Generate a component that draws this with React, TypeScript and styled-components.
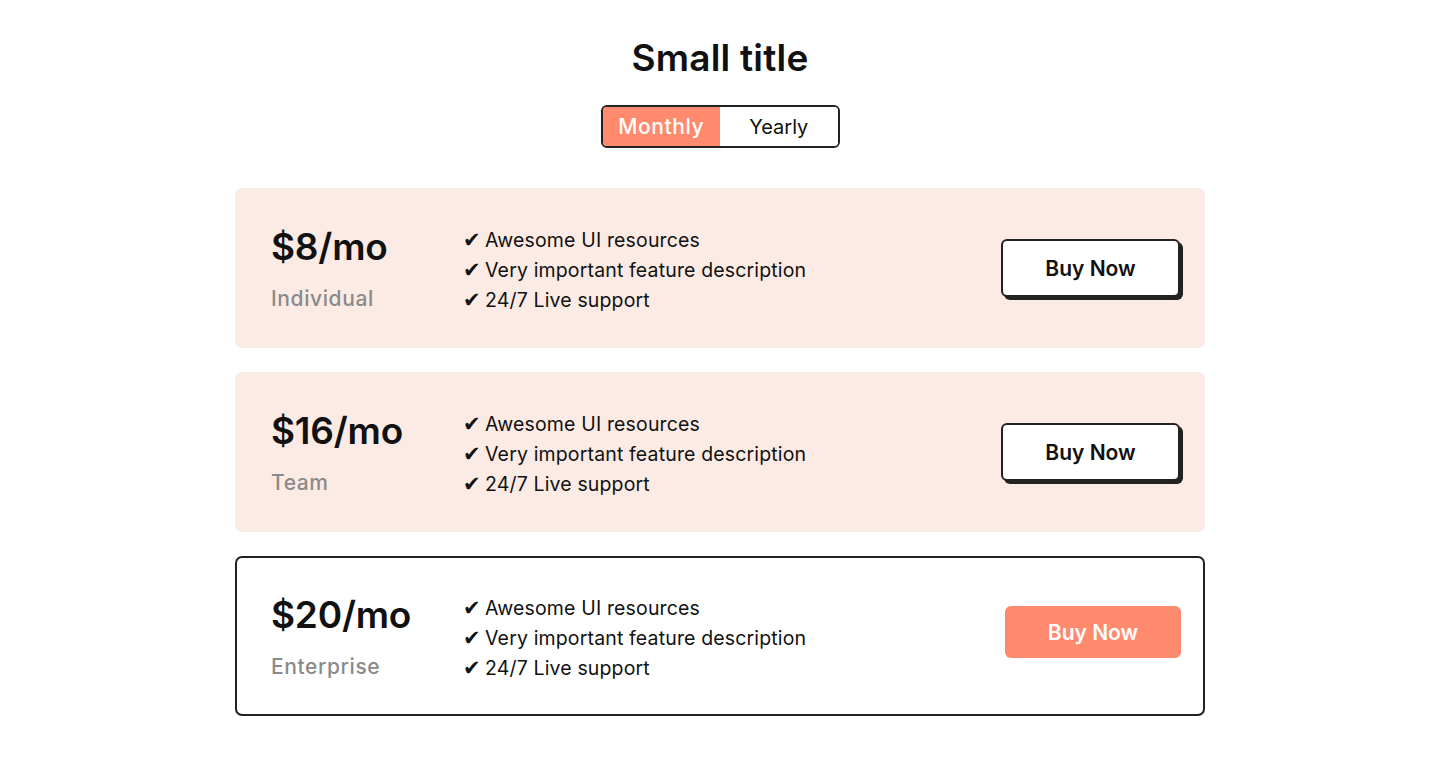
import React, { useState } from 'react';
import styled, { createGlobalStyle } from 'styled-components';

const GlobalStyle = createGlobalStyle`
  body {
    margin: 0;
    background: #ffffff;
    font-family: 'Inter', 'Noto Sans', sans-serif;
    color: #111;
  }
`;

const Page = styled.div`
  display: flex;
  flex-direction: column;
  align-items: center;
  padding-top: 36px;
`;

const Title = styled.h1`
  margin: 0;
  font-size: 37px;
  font-weight: 600;
  line-height: 44px;
  letter-spacing: 0.2px;
`;

const Toggle = styled.div`
  display: flex;
  margin-top: 25px;
  border: 2px solid #222;
  border-radius: 6px;
  overflow: hidden;
  width: 235px;
  height: 39px;
`;

const ToggleOption = styled.button<{ $active?: boolean }>`
  flex: 1;
  border: none;
  margin: 0;
  padding: 0;
  font-family: inherit;
  font-size: ${p => (p.$active ? '21px' : '20px')};
  font-weight: ${p => (p.$active ? 500 : 400)};
  letter-spacing: ${p => (p.$active ? '0.6px' : '0')};
  background: ${p => (p.$active ? '#ff8a6d' : '#fff')};
  color: ${p => (p.$active ? '#fff' : '#111')};
  cursor: pointer;
`;

const Plans = styled.div`
  display: flex;
  flex-direction: column;
  gap: 24px;
  margin-top: 40px;
  width: 970px;
`;

const Card = styled.div<{ $highlight?: boolean }>`
  box-sizing: border-box;
  height: 160px;
  display: flex;
  align-items: center;
  padding: 0 22px 0 36px;
  border-radius: 7px;
  background: ${p => (p.$highlight ? '#fff' : '#fbebe4')};
  border: ${p => (p.$highlight ? '2px solid #222' : 'none')};
  padding-left: ${p => (p.$highlight ? '34px' : '36px')};
`;

const PriceCol = styled.div`
  width: 192px;
  display: flex;
  flex-direction: column;
  gap: 18px;
  margin-top: 4px;
`;

const Price = styled.div`
  font-size: 37px;
  font-weight: 600;
  line-height: 40px;
  letter-spacing: -0.2px;
`;

const PlanName = styled.div`
  font-size: 21px;
  font-weight: 500;
  color: #8a8a8a;
  line-height: 28px;
  letter-spacing: 0.6px;
`;

const Features = styled.ul`
  list-style: none;
  margin: 4px 0 0;
  padding: 0;
  flex: 1;
  font-size: 19.5px;
  line-height: 30px;
  letter-spacing: 0.15px;
`;

const Feature = styled.li`
  display: flex;
  align-items: center;

  &::before {
    content: '✔';
    width: 22px;
    flex: none;
    font-family: 'DejaVu Sans', sans-serif;
    font-size: 21px;
    line-height: 30px;
  }
`;

const BuyButton = styled.button<{ $primary?: boolean }>`
  box-sizing: border-box;
  font-family: inherit;
  font-size: 21px;
  font-weight: 600;
  letter-spacing: 0;
  border-radius: 6px;
  cursor: pointer;
  width: ${p => (p.$primary ? '176px' : '179px')};
  height: ${p => (p.$primary ? '52px' : '58px')};
  margin-right: ${p => (p.$primary ? '0' : '3px')};
  margin-bottom: ${p => (p.$primary ? '8px' : '0')};
  background: ${p => (p.$primary ? '#ff8a6d' : '#fff')};
  color: ${p => (p.$primary ? '#fff' : '#111')};
  border: ${p => (p.$primary ? 'none' : '2px solid #222')};
  box-shadow: ${p => (p.$primary ? 'none' : '3px 3px 0 #222')};
`;

const plans = [
  { price: '$8/mo', name: 'Individual' },
  { price: '$16/mo', name: 'Team' },
  { price: '$20/mo', name: 'Enterprise', highlight: true },
];

const features = ['Awesome UI resources', 'Very important feature description', '24/7 Live support'];

const App: React.FC = () => {
  const [period, setPeriod] = useState<'monthly' | 'yearly'>('monthly');

  return (
    <>
      <GlobalStyle />
      <Page>
        <Title>Small title</Title>
        <Toggle>
          <ToggleOption $active={period === 'monthly'} onClick={() => setPeriod('monthly')}>
            Monthly
          </ToggleOption>
          <ToggleOption $active={period === 'yearly'} onClick={() => setPeriod('yearly')}>
            Yearly
          </ToggleOption>
        </Toggle>
        <Plans>
          {plans.map(plan => (
            <Card key={plan.name} $highlight={plan.highlight}>
              <PriceCol>
                <Price>{plan.price}</Price>
                <PlanName>{plan.name}</PlanName>
              </PriceCol>
              <Features>
                {features.map(f => (
                  <Feature key={f}>{f}</Feature>
                ))}
              </Features>
              <BuyButton $primary={plan.highlight}>Buy Now</BuyButton>
            </Card>
          ))}
        </Plans>
      </Page>
    </>
  );
};

export default App;
